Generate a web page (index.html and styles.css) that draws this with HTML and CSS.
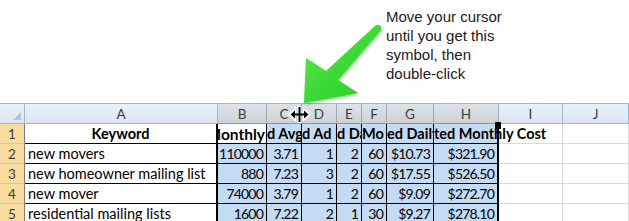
FILE: index.html
```html
<!DOCTYPE html>
<html>
<head>
<meta charset="utf-8">
<link rel="stylesheet" href="styles.css">
</head>
<body>
<div class="page">
  <div class="note">
    <p>Move your cursor<br>until you get this<br>symbol, then<br>double-click</p>
  </div>
  <div class="sheet">
    <div class="c corner"><span class="tri"></span></div>
    <div class="c ch">A</div>
    <div class="c ch on">B</div>
    <div class="c ch on">C</div>
    <div class="c ch on">D</div>
    <div class="c ch on">E</div>
    <div class="c ch on">F</div>
    <div class="c ch on">G</div>
    <div class="c ch on">H</div>
    <div class="c ch">I</div>
    <div class="c ch">J</div>

    <div class="c rh">1</div>
    <div class="c a b ctr">Keyword</div>
    <div class="c act b end tight">Monthly</div>
    <div class="c s b st">d Avg.</div>
    <div class="c s b st">d Ad P</div>
    <div class="c s b st">d Da</div>
    <div class="c s b st">Mo</div>
    <div class="c s b st">ed Daily</div>
    <div class="c s h b st over">ted Monthly Cost</div>
    <div class="c e"></div>
    <div class="c e"></div>

    <div class="c rh">2</div>
    <div class="c a">new movers</div>
    <div class="c s n">110000</div>
    <div class="c s n">3.71</div>
    <div class="c s n">1</div>
    <div class="c s n">2</div>
    <div class="c s n">60</div>
    <div class="c s n">$10.73</div>
    <div class="c s h n">$321.90</div>
    <div class="c e"></div>
    <div class="c e"></div>

    <div class="c rh">3</div>
    <div class="c a">new homeowner mailing list</div>
    <div class="c s n">880</div>
    <div class="c s n">7.23</div>
    <div class="c s n">3</div>
    <div class="c s n">2</div>
    <div class="c s n">60</div>
    <div class="c s n">$17.55</div>
    <div class="c s h n">$526.50</div>
    <div class="c e"></div>
    <div class="c e"></div>

    <div class="c rh">4</div>
    <div class="c a">new mover</div>
    <div class="c s n">74000</div>
    <div class="c s n">3.79</div>
    <div class="c s n">1</div>
    <div class="c s n">2</div>
    <div class="c s n">60</div>
    <div class="c s n">$9.09</div>
    <div class="c s h n">$272.70</div>
    <div class="c e"></div>
    <div class="c e"></div>

    <div class="c rh">5</div>
    <div class="c a">residential mailing lists</div>
    <div class="c s n">1600</div>
    <div class="c s n">7.22</div>
    <div class="c s n">2</div>
    <div class="c s n">1</div>
    <div class="c s n">30</div>
    <div class="c s n">$9.27</div>
    <div class="c s h n">$278.10</div>
    <div class="c e"></div>
    <div class="c e"></div>
  </div>

  <svg class="overlay" viewBox="0 0 629 221" width="629" height="221">
    <defs>
      <linearGradient id="g" x1="0" y1="0" x2="1" y2="1">
        <stop offset="0" stop-color="#5fe84f"/>
        <stop offset="1" stop-color="#1fcb1f"/>
      </linearGradient>
      <filter id="sh" x="-20%" y="-20%" width="140%" height="140%">
        <feDropShadow dx="1" dy="1.5" stdDeviation="1.5" flood-color="#0a8a0a" flood-opacity="0.45"/>
      </filter>
    </defs>
    <path filter="url(#sh)" fill="url(#g)" d="M304,103 L306,58 L326,71 L375.5,25.6 A3.5,3.5 0 0 1 380.5,30.4 L338,80 L358,93 Z"/>
    <g class="cursor">
      <rect x="297.5" y="106" width="4" height="17" fill="#fff"/>
      <path d="M289,114.5 L295,109.5 L295,119.5 Z M310,114.5 L304,109.5 L304,119.5 Z" fill="#fff" stroke="#fff" stroke-width="2"/>
      <rect x="292" y="113.5" width="15" height="2" fill="#000"/>
      <path d="M290.5,114.5 L295,110.5 L295,118.5 Z M308.5,114.5 L304,110.5 L304,118.5 Z" fill="#000"/>
      <rect x="298.5" y="107" width="2" height="15" fill="#000"/>
    </g>
  </svg>
</div>
</body>
</html>
```

FILE: styles.css
```css
* {
  box-sizing: border-box;
}

body {
  margin: 0;
  background: #ffffff;
}

.page {
  position: relative;
  width: 629px;
  height: 221px;
  overflow: hidden;
  font-family: "Liberation Sans", Arial, sans-serif;
}

.note {
  height: 103px;
  padding: 7px 0 0 386px;
  font-size: 15px;
  line-height: 19px;
  color: #1a1a1a;
}

.note p {
  margin: 0;
}

.sheet {
  display: grid;
  grid-template-columns: 25px 193px 49px 35px 35px 25px 25px 47px 65px 64px 66px;
  grid-template-rows: 21px repeat(5, 20px);
  font-family: Lato, "Liberation Sans", sans-serif;
  font-size: 14.5px;
  color: #000;
}

.c {
  display: flex;
  align-items: center;
  overflow: hidden;
  white-space: nowrap;
  padding: 0 3px;
  border-right: 1px solid #000;
  border-bottom: 1px solid #000;
}

.corner {
  justify-content: flex-end;
  align-items: flex-end;
  padding: 0 3px 3px 0;
  background: linear-gradient(#eaf0f8, #dbe5f1);
  border-top: 1px solid #9eb6ce;
  border-right: 1px solid #9eb6ce;
  border-bottom: 1px solid #9eb6ce;
}

.tri {
  width: 0;
  height: 0;
  border-left: 8px solid transparent;
  border-bottom: 8px solid #b4c4d6;
}

.ch {
  justify-content: center;
  background: linear-gradient(#eaf0f8, #dbe5f1);
  border-top: 1px solid #9eb6ce;
  border-right: 1px solid #9eb6ce;
  border-bottom: 1px solid #9eb6ce;
  color: #3b3b3b;
  font-size: 13.5px;
  padding: 0;
}

.ch.on {
  background: linear-gradient(#dfe3e8, #cdd2d8);
  border-right-color: #a2a6ab;
  border-bottom-color: #8f9499;
}

.rh {
  justify-content: center;
  padding: 0;
  background: #f8dc9f;
  border-right: 1px solid #7a7a7a;
  border-bottom: 1px solid #e3c585;
  color: #3b3b3b;
  font-size: 13.5px;
}

.a {
  border-right: 2px solid #000;
  background: #fff;
}

.s {
  background: #c5dbf3;
}

.act {
  background: #fff;
}

.h {
  border-right: 2px solid #000;
}

.b {
  font-weight: bold;
  font-size: 14.5px;
}

.ctr {
  justify-content: center;
}

.end {
  justify-content: flex-end;
  padding: 0 3px 0 0;
}

.tight {
  padding: 0 1px 0 0;
  font-size: 15.5px;
}

.st {
  justify-content: flex-start;
  padding: 0;
}

.over {
  overflow: visible;
  position: relative;
}

.over::after {
  content: "";
  position: absolute;
  right: -4px;
  top: -2px;
  width: 6px;
  height: 7px;
  background: #000;
}

.n {
  justify-content: flex-end;
  padding: 0 3px 0 0;
  font-size: 14px;
  letter-spacing: -0.8px;
}

.e {
  background: transparent;
  border-right: 1px solid #d9d9d9;
  border-bottom: 1px solid #d9d9d9;
}

.overlay {
  position: absolute;
  left: 0;
  top: 0;
  pointer-events: none;
}
```
